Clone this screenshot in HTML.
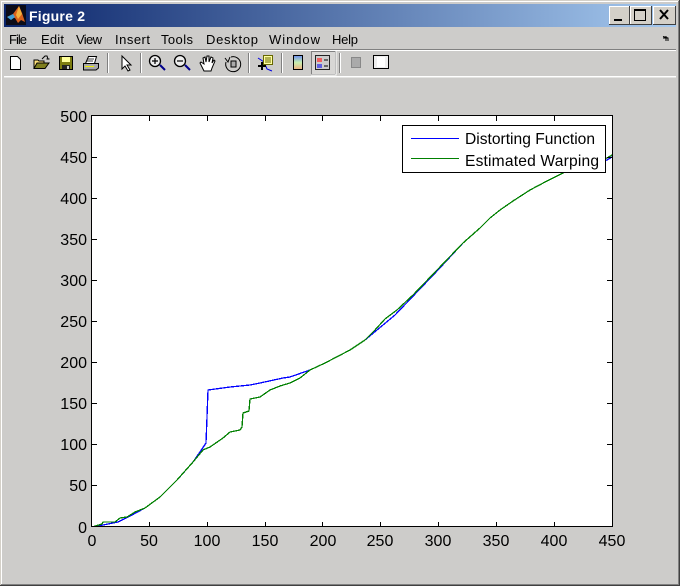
<!DOCTYPE html>
<html><head><meta charset="utf-8"><style>
html,body{margin:0;padding:0;background:#cdccca}
svg{display:block}
text{font-family:"Liberation Sans",Arial,sans-serif}
</style></head><body>
<svg width="680" height="586" viewBox="0 0 680 586" xmlns="http://www.w3.org/2000/svg">
<defs><linearGradient id="tb" x1="0" x2="1" y1="0" y2="0"><stop offset="0" stop-color="#0a246a"/><stop offset="1" stop-color="#a6caf0"/></linearGradient></defs>
<rect width="680" height="586" fill="#cdccca"/>
<!-- window frame -->
<path d="M0.5 585V0.5H679" fill="none" stroke="#d4d0c8"/>
<path d="M1.5 584V1.5H678" fill="none" stroke="#fff"/>
<path d="M0 585.5H680M679.5 0V586" fill="none" stroke="#404040"/>
<path d="M1 584.5H679M678.5 1V585" fill="none" stroke="#808080"/>
<rect x="4" y="4" width="672" height="23" fill="url(#tb)"/>
<!-- matlab logo -->
<rect x="6" y="5" width="20" height="20" fill="#0c0c18"/>
<path d="M7 17L13 14L19 6L22 13L25 22L21 20L18 23L15 18Z" fill="#d8601c"/>
<path d="M7 17L13 14L15 17L11 20Z" fill="#3f9fd8"/>
<path d="M19 6L22 14L18 19L16 15Z" fill="#f2b03c"/>
<text x="29" y="21" font-size="14" font-weight="bold" fill="#fff" textLength="56">Figure 2</text>
<!-- window buttons -->
<g>
<rect x="609" y="6" width="20" height="18" fill="#d4d0c8" stroke="none"/><path d="M609.5 24V6.5H629" stroke="#fff" fill="none"/><path d="M609 24.5H629.5V6" stroke="#404040" fill="none"/>
<rect x="614" y="19" width="8" height="2" fill="#000"/>
<rect x="630" y="6" width="21" height="18" fill="#d4d0c8"/><path d="M630.5 24V6.5H651" stroke="#fff" fill="none"/><path d="M630 24.5H651.5V6" stroke="#404040" fill="none"/>
<rect x="634.500" y="9.500" width="11" height="11" fill="none" stroke="#000"/><rect x="634" y="9" width="12" height="2" fill="#000"/>
<rect x="653" y="6" width="22" height="18" fill="#d4d0c8"/><path d="M653.5 24V6.5H675" stroke="#fff" fill="none"/><path d="M653 24.5H675.500V6" stroke="#404040" fill="none"/>
<path d="M660 10L668 19M668 10L660 19" stroke="#000" stroke-width="2" fill="none"/>
</g>
<!-- menu -->
<g font-size="13" fill="#000">
<text x="9" y="44" textLength="18">File</text><text x="41" y="44" textLength="23">Edit</text><text x="76" y="44" textLength="26">View</text><text x="115" y="44" textLength="35">Insert</text><text x="161" y="44" textLength="32">Tools</text><text x="206" y="44" textLength="52">Desktop</text><text x="269" y="44" textLength="51">Window</text><text x="332" y="44" textLength="26">Help</text>
</g>
<path d="M663 36.500L668 38V41M666 36V41M663 38H668" fill="none" stroke="#000"/>
<rect x="4" y="49" width="672" height="1" fill="#808080"/><rect x="4" y="50" width="672" height="1" fill="#fff"/>
<rect x="4" y="76" width="672" height="1" fill="#fff"/><rect x="4" y="77" width="672" height="1" fill="#e4e4e2"/>
<!-- separators -->
<g fill="#808080"><rect x="107" y="53" width="1" height="20"/><rect x="140" y="53" width="1" height="20"/><rect x="248" y="53" width="1" height="20"/><rect x="281" y="53" width="1" height="20"/><rect x="339" y="53" width="1" height="20"/></g>
<g fill="#fff"><rect x="108" y="53" width="1" height="20"/><rect x="141" y="53" width="1" height="20"/><rect x="249" y="53" width="1" height="20"/><rect x="282" y="53" width="1" height="20"/><rect x="340" y="53" width="1" height="20"/></g>
<!-- toolbar icons -->
<path d="M10.500 56.500H17.500L20.500 59.500V69.500H10.500Z" fill="#fff" stroke="#000"/>
<path d="M34 68V60H38L39 61H44V68Z" fill="#ffe27a" stroke="#000"/>
<path d="M34 68.500L37 63H49L45 68.500Z" fill="#7f7f1f" stroke="#000"/><path d="M42 59L45 56H47L48 59M46.500 59H49.500" fill="none" stroke="#000"/>
<rect x="59.500" y="56.500" width="13" height="13" fill="#7c7c10" stroke="#000"/><rect x="62" y="57" width="8" height="5" fill="#ffff9c"/><rect x="62" y="65" width="8" height="4" fill="#222"/><rect x="67" y="66" width="2" height="3" fill="#ccc"/>
<path d="M85.500 63.500L88.500 56.500H96.500L94.500 63.500Z" fill="#fff" stroke="#000"/><path d="M87 59H94M86.500 61H93" stroke="#000" stroke-width="0.800"/>
<path d="M83.500 63.500H98.500V68L96 70H83.500Z" fill="#aaa" stroke="#000"/><rect x="85" y="66" width="9" height="1" fill="#eeee00"/>
<path d="M122 56V69L125 66L128 71L130 70L127 65H131Z" fill="#fff" stroke="#000"/>
<circle cx="155" cy="61" r="5.500" fill="#eee" stroke="#000" stroke-width="1.300"/><path d="M152 61H158M155 58V64" stroke="#000" stroke-width="1.200"/><path d="M160 65L165 70" stroke="#00008b" stroke-width="2"/>
<circle cx="180" cy="61" r="5.500" fill="#eee" stroke="#000" stroke-width="1.300"/><path d="M177 61H183" stroke="#000" stroke-width="1.200"/><path d="M185 65L190 70" stroke="#00008b" stroke-width="2"/>
<path d="M204 71L200 63L201 62L204 64L203 58L205 57L206 62L207 56L209 56L209 62L211 57L213 58L212 63L214 60L215 61L212 68L211 71Z" fill="#fff" stroke="#000"/>
<path d="M231 57A7.500 7.500 0 1 1 226 62M225 58L228 62L230 57" fill="none" stroke="#000"/><rect x="231" y="61" width="5" height="6" fill="#aaa" stroke="#000"/>
<path d="M258 58L264 62L267 69L272 71" fill="none" stroke="#0000e0"/><rect x="263.500" y="55.500" width="9" height="9" fill="#ffffa0" stroke="#666600"/><path d="M265 58H271M265 60H271M265 62H271" stroke="#666600"/>
<path d="M258 66H266M262 62V70" stroke="#000" stroke-width="2"/>
<defs><linearGradient id="cb" x1="0" x2="0" y1="0" y2="1"><stop offset="0" stop-color="#6a8cf0"/><stop offset=".5" stop-color="#c8f0b0"/><stop offset="1" stop-color="#f0b080"/></linearGradient></defs>
<rect x="293.500" y="55.500" width="9" height="14" fill="url(#cb)" stroke="#000"/>
<rect x="311.500" y="51.500" width="24" height="23" fill="#d8d7d5" stroke="#808080"/><path d="M336 51V75H311" fill="none" stroke="#fff"/>
<rect x="315.500" y="55.500" width="14" height="14" fill="#ccc" stroke="#222"/><rect x="317" y="58" width="5" height="4" fill="#f06060"/><rect x="317" y="64" width="5" height="4" fill="#6060e0"/><path d="M324 60H328M324 66H328" stroke="#000"/>
<rect x="351.500" y="57.500" width="9" height="10" fill="#aaa" stroke="#888"/>
<rect x="373.500" y="55.500" width="15" height="13" fill="#eee" stroke="#000"/><rect x="377" y="57" width="8" height="10" fill="#fff"/>
<!-- axes -->
<rect x="92" y="116" width="520" height="411" fill="#fff"/>
<clipPath id="pc"><rect x="92" y="116" width="520" height="411"/></clipPath>
<g clip-path="url(#pc)" fill="none" stroke-width="1.300" shape-rendering="crispEdges">
<polyline stroke="#0000ff" points="92,527 103,525 118,522 132,515 145,508 160,497 177,480 193,462 202,449 206,443 207,417 208,390 230,387 250,385 260,383 283,378 290,377 310,370 325,363 350,350 365,340 383,325 395,315 417,292 438,270 463,243 480,228 490,218 500,210 513,201 530,190 547,181 563,173 585,165 607,160 612,157"/>
<polyline stroke="#008000" points="92,527 102,524 103,522 115,522 120,518 127,517 135,512 145,508 160,497 177,480 193,462 203,450 210,447 223,438 230,432 240,430 242,427 243,413 249,411 250,399 260,397 270,390 280,386 290,383 300,378 310,370 325,363 350,350 365,340 375,330 385,319 397,310 413,295 438,269 463,243 480,228 490,218 500,210 513,201 530,190 547,181 563,173 585,164 607,158 612,155"/>
</g>
<g stroke="#000" fill="none" shape-rendering="crispEdges">
<rect x="91.500" y="115.500" width="521" height="411"/>
<path d="M149.500 527v-5M207.500 527v-5M265.500 527v-5M322.500 527v-5M380.500 527v-5M438.500 527v-5M496.500 527v-5M554.500 527v-5M149.500 116v5M207.500 116v5M265.500 116v5M322.500 116v5M380.500 116v5M438.500 116v5M496.500 116v5M554.500 116v5"/>
<path d="M92 485.500h5M92 444.500h5M92 403.500h5M92 362.500h5M92 321.500h5M92 280.500h5M92 239.500h5M92 198.500h5M92 157.500h5M612 485.500h-5M612 444.500h-5M612 403.500h-5M612 362.500h-5M612 321.500h-5M612 280.500h-5M612 239.500h-5M612 198.500h-5M612 157.500h-5"/>
</g>
<g font-size="16" fill="#000" text-anchor="end">
<text x="87" y="533">0</text><text x="87" y="491">50</text><text x="87" y="450">100</text><text x="87" y="409">150</text><text x="87" y="368">200</text><text x="87" y="327">250</text><text x="87" y="286">300</text><text x="87" y="245">350</text><text x="87" y="204">400</text><text x="87" y="163">450</text><text x="87" y="122">500</text>
</g>
<g font-size="16" fill="#000" text-anchor="middle">
<text x="92" y="546">0</text><text x="149" y="546">50</text><text x="207" y="546">100</text><text x="265" y="546">150</text><text x="323" y="546">200</text><text x="380" y="546">250</text><text x="438" y="546">300</text><text x="496" y="546">350</text><text x="554" y="546">400</text><text x="612" y="546">450</text>
</g>
<!-- legend -->
<rect x="402.500" y="125.500" width="203" height="47" fill="#fff" stroke="#000" shape-rendering="crispEdges"/>
<path d="M411 138.500H459" stroke="#0000ff" shape-rendering="crispEdges"/>
<path d="M411 158.500H459" stroke="#008000" shape-rendering="crispEdges"/>
<text x="465" y="144" font-size="15.600" fill="#000">Distorting Function</text>
<text x="465" y="166" font-size="15.600" fill="#000" textLength="134">Estimated Warping</text>
</svg>
</body></html>
